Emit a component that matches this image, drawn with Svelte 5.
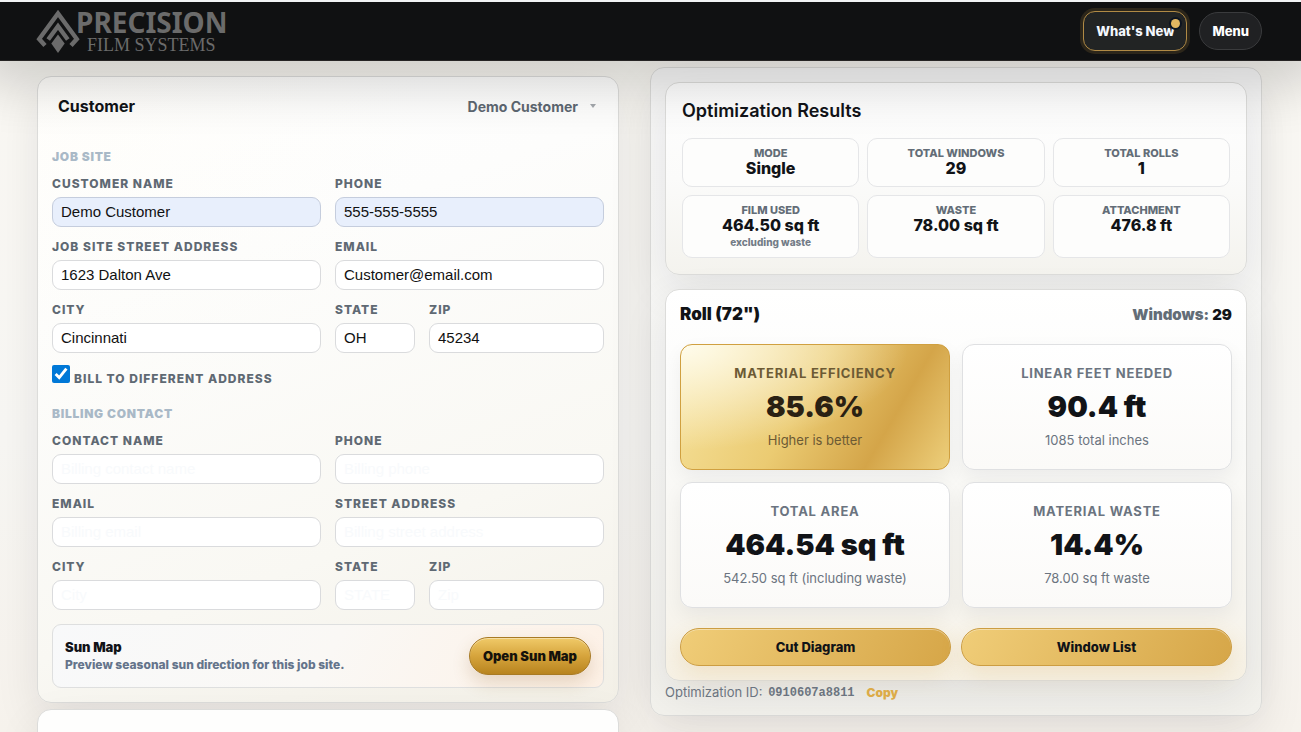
<script lang="ts">
	let customer = $state({
		name: 'Demo Customer',
		phone: '555-555-5555',
		street: '1623 Dalton Ave',
		email: 'Customer@email.com',
		city: 'Cincinnati',
		state: 'OH',
		zip: '45234'
	});
	let billing = $state({ name: '', phone: '', email: '', street: '', city: '', state: '', zip: '' });
	let billDifferent = $state(true);

	const summary = [
		{ label: 'MODE', value: 'Single' },
		{ label: 'TOTAL WINDOWS', value: '29' },
		{ label: 'TOTAL ROLLS', value: '1' },
		{ label: 'FILM USED', value: '464.50 sq ft', note: 'excluding waste' },
		{ label: 'WASTE', value: '78.00 sq ft' },
		{ label: 'ATTACHMENT', value: '476.8 ft' }
	];

	const metrics = [
		{ label: 'MATERIAL EFFICIENCY', value: '85.6%', note: 'Higher is better', gold: true },
		{ label: 'LINEAR FEET NEEDED', value: '90.4 ft', note: '1085 total inches' },
		{ label: 'TOTAL AREA', value: '464.54 sq ft', note: '542.50 sq ft (including waste)' },
		{ label: 'MATERIAL WASTE', value: '14.4%', note: '78.00 sq ft waste' }
	];

	const optimizationId = '0910607a8811';

	function copyId() {
		navigator.clipboard?.writeText(optimizationId);
	}
</script>

<div class="page">
	<header class="topbar">
		<svg class="logo" width="194" height="58" viewBox="0 -5 194 58" role="img" aria-label="Precision Film Systems">
			<g fill="none" stroke="#6b6b6b" stroke-width="4.4">
				<path d="M9 38.5 3.2 32 22 6.5 40.8 32 35 38.5" />
				<path d="M12.2 32.5 22 19.3 31.8 32.5" />
			</g>
			<path d="M22 27.4 28.7 36.5 22 46 15.3 36.5Z" fill="#6b6b6b" />
			<text class="logo-main" x="40" y="26">PRECISION</text>
			<text class="logo-sub" x="51" y="44">FILM SYSTEMS</text>
		</svg>
		<nav class="actions">
			<button class="whats-new">What's New<span class="dot"></span></button>
			<button class="menu">Menu</button>
		</nav>
	</header>

	<main class="columns">
		<div class="left">
			<section class="card customer">
				<div class="card-head">
					<h2>Customer</h2>
					<button class="toggle">Demo Customer <span class="caret"></span></button>
				</div>

				<form class="form">
					<h3 class="wide">JOB SITE</h3>
					<label class="field">CUSTOMER NAME
						<input class="autofill" bind:value={customer.name} />
					</label>
					<label class="field">PHONE
						<input class="autofill" type="tel" bind:value={customer.phone} />
					</label>
					<label class="field">JOB SITE STREET ADDRESS
						<input bind:value={customer.street} />
					</label>
					<label class="field">EMAIL
						<input type="email" bind:value={customer.email} />
					</label>
					<label class="field">CITY
						<input bind:value={customer.city} />
					</label>
					<div class="state-zip">
						<label class="field">STATE
							<input bind:value={customer.state} />
						</label>
						<label class="field">ZIP
							<input bind:value={customer.zip} />
						</label>
					</div>

					<label class="check wide">
						<input type="checkbox" bind:checked={billDifferent} />
						<span>BILL TO DIFFERENT ADDRESS</span>
					</label>

					{#if billDifferent}
						<h3 class="wide">BILLING CONTACT</h3>
						<label class="field">CONTACT NAME
							<input placeholder="Billing contact name" bind:value={billing.name} />
						</label>
						<label class="field">PHONE
							<input type="tel" placeholder="Billing phone" bind:value={billing.phone} />
						</label>
						<label class="field">EMAIL
							<input type="email" placeholder="Billing email" bind:value={billing.email} />
						</label>
						<label class="field">STREET ADDRESS
							<input placeholder="Billing street address" bind:value={billing.street} />
						</label>
						<label class="field">CITY
							<input placeholder="City" bind:value={billing.city} />
						</label>
						<div class="state-zip">
							<label class="field">STATE
								<input placeholder="STATE" bind:value={billing.state} />
							</label>
							<label class="field">ZIP
								<input placeholder="Zip" bind:value={billing.zip} />
							</label>
						</div>
					{/if}
				</form>

				<div class="sun-map">
					<div>
						<strong>Sun Map</strong>
						<p>Preview seasonal sun direction for this job site.</p>
					</div>
					<button>Open Sun Map</button>
				</div>
			</section>

			<section class="card next"></section>
		</div>

		<aside class="results">
			<section class="card overview">
				<h2>Optimization Results</h2>
				<div class="tiles">
					{#each summary as item}
						<div class="tile">
							<span class="tile-label">{item.label}</span>
							<strong>{item.value}</strong>
							{#if item.note}<small>{item.note}</small>{/if}
						</div>
					{/each}
				</div>
			</section>

			<section class="card roll">
				<div class="roll-head">
					<h2>Roll (72")</h2>
					<span>Windows: <b>29</b></span>
				</div>
				<div class="metrics">
					{#each metrics as metric}
						<div class="metric" class:gold={metric.gold}>
							<span class="metric-label">{metric.label}</span>
							<strong>{metric.value}</strong>
							<small>{metric.note}</small>
						</div>
					{/each}
				</div>
				<div class="roll-actions">
					<button>Cut Diagram</button>
					<button>Window List</button>
				</div>
			</section>

			<p class="opt-id">Optimization ID: <code>{optimizationId}</code><button onclick={copyId}>Copy</button></p>
		</aside>
	</main>
</div>

<style>
	:global(body) {
		margin: 0;
		background: #f8f6f1;
	}
	.page {
		height: 100vh;
		overflow: hidden;
		box-sizing: border-box;
		border-top: 2px solid #f1f3f4;
		font-family: Inter, "Liberation Sans", sans-serif;
		color: #111317;
		background: linear-gradient(180deg, #faf8f3, #f7f6f3 60%, #f6f2ec);
	}
	.page :global(*) {
		box-sizing: border-box;
	}
	h2, h3, p {
		margin: 0;
	}
	button {
		font-family: inherit;
		cursor: pointer;
	}

	/* top bar */
	.topbar {
		position: relative;
		z-index: 2;
		display: flex;
		align-items: center;
		justify-content: space-between;
		height: 59px;
		padding: 0 39px 0 36px;
		background: #101112;
		border-bottom: 1px solid #262424;
		box-shadow: 0 6px 50px 20px rgba(0, 0, 0, .16);
	}
	.logo-main {
		font: 700 28px "Noto Sans", sans-serif;
		fill: #6b6b6b;
	}
	.logo-sub {
		font: 400 18px "Liberation Serif", serif;
		fill: #6b6b6b;
	}
	.actions {
		display: flex;
		align-items: center;
		gap: 12px;
	}
	.actions button {
		height: 38px;
		padding: 0 12px;
		font-size: 13px;
		font-weight: 800;
		color: #fff;
		background: #202123;
		border: 1px solid #3a3b3d;
		border-radius: 19px;
	}
	.actions .whats-new {
		position: relative;
		height: 40px;
		color: #f4f7fc;
		background: #222424;
		border-color: #b08a45;
		border-radius: 12px;
		box-shadow: 0 0 0 3px rgba(220, 170, 80, .14);
	}
	.dot {
		position: absolute;
		top: 7px;
		right: 6px;
		width: 9px;
		height: 9px;
		border-radius: 50%;
		background: #e3b661;
		box-shadow: 0 0 0 2px #0d1420;
	}

	.columns {
		display: grid;
		grid-template-columns: 582fr 612fr;
		gap: 31px;
		align-items: start;
		padding: 6px 39px 0 37px;
	}
	.left {
		display: grid;
		gap: 6px;
		padding-top: 9px;
	}
	.card {
		border: 1px solid #dcdcda;
		border-radius: 14px;
		box-shadow: 0 16px 45px rgba(20, 25, 35, .09);
	}

	/* customer form */
	.customer {
		padding: 14px;
		background:
			radial-gradient(circle at 0 0, rgba(255, 250, 235, .2), transparent 45%),
			linear-gradient(160deg, #fff, #fdfdfc 30%, #f9f8f3 70%, #f3f0e7);
	}
	.card-head {
		display: flex;
		justify-content: space-between;
		align-items: center;
		height: 30px;
		padding: 0 6px;
		margin-bottom: 27px;
	}
	.card-head h2 {
		font-size: 16px;
		font-weight: 700;
	}
	.toggle {
		display: flex;
		align-items: center;
		gap: 12px;
		padding: 0;
		border: 0;
		background: none;
		font-size: 14px;
		font-weight: 700;
		color: #5d6771;
	}
	.caret {
		margin-right: 2px;
		border: 3px solid transparent;
		border-top: 4px solid #a4a8ad;
		border-bottom: 0;
	}
	.form {
		display: grid;
		grid-template-columns: 1fr 1fr;
		gap: 11px 14px;
	}
	.wide {
		grid-column: 1 / -1;
	}
	h3 {
		margin-bottom: -2px;
		font-size: 12px;
		line-height: 18px;
		font-weight: 900;
		letter-spacing: .06em;
		color: #a9b9c7;
	}
	.field {
		display: grid;
		gap: 4px;
		font-size: 12px;
		line-height: 18px;
		font-weight: 800;
		letter-spacing: 1px;
		color: #5f6973;
	}
	.field input {
		width: 100%;
		height: 30px;
		padding: 0 8px 2px;
		border: 1px solid #dadbdd;
		border-radius: 9px;
		background: #fff;
		font: 15px "Liberation Sans", Arial, sans-serif;
		color: #111;
	}
	.field input::placeholder {
		color: #f8fafc;
		opacity: 1;
	}
	.field .autofill {
		background: #e8effc;
		border-color: #c5cddd;
	}
	.state-zip {
		display: grid;
		grid-template-columns: 80px 1fr;
		gap: 14px;
	}
	.check {
		display: flex;
		gap: 4px;
		height: 30px;
		font-size: 12px;
		line-height: 16px;
		font-weight: 800;
		letter-spacing: 1px;
		color: #5f6973;
	}
	.check input {
		width: 18px;
		height: 18px;
		margin: 1px 0 0;
		accent-color: #0078d7;
	}
	.check span {
		padding-top: 7px;
	}
	.sun-map {
		display: flex;
		align-items: center;
		justify-content: space-between;
		height: 64px;
		margin-top: 14px;
		padding: 0 12px;
		border: 1px solid #dedfdf;
		border-radius: 9px;
		background: linear-gradient(120deg, #f8f9fa, #faf8f5 50%, #fdf1e6);
	}
	.sun-map strong {
		display: block;
		font-size: 13px;
		line-height: 18px;
		font-weight: 900;
	}
	.sun-map p {
		font-size: 12px;
		line-height: 18px;
		font-weight: 800;
		color: #64748b;
	}
	.sun-map button {
		height: 38px;
		padding: 0 13px;
		border: 1px solid #a87a24;
		border-radius: 19px;
		background: linear-gradient(180deg, #f0ca68, #d6a43c 50%, #b8841f);
		box-shadow: 0 8px 18px rgba(140, 90, 30, .2), inset 0 1px 0 rgba(255, 255, 255, .4);
		font-size: 13px;
		font-weight: 900;
		color: #15120b;
	}
	.next {
		height: 120px;
		background: #fefefd;
	}

	/* results panel */
	.results {
		padding: 14px 14px 13px;
		border: 1px solid #dcdcda;
		border-radius: 14px;
		background: linear-gradient(180deg, #f8f8f8, #f7f7f4 60%, #f3f2ed);
		box-shadow: 0 16px 45px rgba(20, 25, 35, .09);
	}
	.overview {
		padding: 15px 16px 16px;
		background: linear-gradient(180deg, #fefefe, #fbfbfa 50%, #f4f3ee);
	}
	.overview h2 {
		margin-bottom: 14px;
		font-size: 18px;
		line-height: 26px;
		font-weight: 600;
	}
	.tiles {
		display: grid;
		grid-template-columns: repeat(3, 1fr);
		gap: 8px;
	}
	.tile {
		display: flex;
		flex-direction: column;
		align-items: center;
		padding: 7px 8px 9px;
		border: 1px solid #e5e6e8;
		border-radius: 10px;
		background: #fdfdfc;
	}
	.tile-label {
		font-size: 11px;
		line-height: 14px;
		font-weight: 800;
		color: #636d77;
	}
	.tile strong {
		font-size: 16px;
		line-height: 17px;
		font-weight: 800;
	}
	.tile small {
		margin-top: 2px;
		font-size: 10px;
		line-height: 12px;
		font-weight: 800;
		color: #737c87;
	}
	.roll {
		margin-top: 14px;
		padding: 14px;
		background: linear-gradient(180deg, #fff, #fafaf8 40%, #f7f5ef 80%, #f6f1e5);
	}
	.roll-head {
		display: flex;
		justify-content: space-between;
		align-items: center;
		height: 20px;
		margin-bottom: 20px;
		font-size: 15px;
		font-weight: 900;
		color: #636d77;
	}
	.roll-head h2 {
		font-size: 17px;
		font-weight: 900;
		color: #111317;
	}
	.roll-head b {
		font-weight: 900;
		color: #111317;
	}
	.metrics {
		display: grid;
		grid-template-columns: 1fr 1fr;
		gap: 12px;
	}
	.metric {
		display: flex;
		flex-direction: column;
		align-items: center;
		padding: 18px 12px 19px;
		border: 1px solid #dfe0e2;
		border-radius: 12px;
		background: linear-gradient(180deg, #fff, #fbfaf8);
		box-shadow: 0 8px 20px rgba(20, 25, 35, .06);
	}
	.metric-label {
		font-size: 13px;
		line-height: 20px;
		font-weight: 700;
		letter-spacing: .06em;
		color: #6b7480;
	}
	.metric strong {
		margin: 4px 0 3px;
		font-size: 29px;
		line-height: 40px;
		font-weight: 900;
	}
	.metric small {
		font-size: 13px;
		line-height: 20px;
		color: #6b7480;
	}
	.gold {
		border-color: #d0a040;
		background:
			radial-gradient(ellipse at 0 0, rgba(255, 253, 240, .95), transparent 60%),
			linear-gradient(120deg, #f7e4a0, #ebcb72 45%, #d4a549 75%, #edcf7b);
	}
	.gold strong {
		color: #2a2113;
	}
	.gold .metric-label, .gold small {
		color: #6c5a34;
	}
	.roll-actions {
		display: grid;
		grid-template-columns: 1fr 1fr;
		gap: 10px;
		margin-top: 20px;
	}
	.roll-actions button {
		height: 38px;
		border: 1px solid #cc9d42;
		border-radius: 19px;
		background: linear-gradient(120deg, #f0cd78, #d6a648);
		box-shadow: 0 8px 22px rgba(214, 166, 72, .2), inset 0 1px 0 rgba(255, 255, 255, .4);
		font-size: 13px;
		font-weight: 800;
		color: #111317;
	}
	.opt-id {
		display: flex;
		align-items: center;
		height: 20px;
		margin-top: 1px;
		font-size: 13px;
		color: #6b7480;
		white-space: pre;
	}
	.opt-id code {
		margin-left: 2px;
		padding-top: 2px;
		font: 700 12px "Liberation Mono", monospace;
	}
	.opt-id button {
		margin-left: 12px;
		padding: 0;
		border: 0;
		background: none;
		font-size: 12px;
		font-weight: 900;
		color: #dcab48;
	}
</style>
